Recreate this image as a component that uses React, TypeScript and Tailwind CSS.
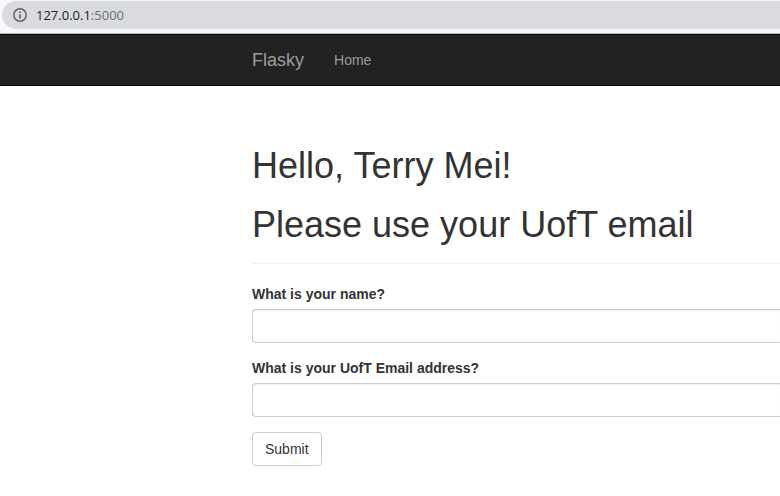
import React, { useState } from "react";

function InfoIcon() {
  return (
    <svg viewBox="0 0 16 16" className="h-4 w-4 shrink-0" aria-hidden="true">
      <circle cx="8" cy="8" r="6.2" fill="none" stroke="#5f6368" strokeWidth="1.5" />
      <rect x="7.2" y="4.4" width="1.6" height="1.6" fill="#5f6368" />
      <rect x="7.2" y="7.2" width="1.6" height="4.4" fill="#5f6368" />
    </svg>
  );
}

function AddressBar() {
  return (
    <div className="border-b border-[#b5b8b5] bg-[#f6f8fd] pt-px pb-1 pl-0.5">
      <div className="flex h-7 items-center gap-2 rounded-l-full bg-[#d9dbe0] pl-2.5 font-['Open_Sans','Noto_Sans',sans-serif] text-[13px] text-[#202124]">
        <InfoIcon />
        <span>
          127.0.0.1<span className="text-[#6b6e73]">:5000</span>
        </span>
      </div>
    </div>
  );
}

function Navbar() {
  return (
    <nav className="flex h-[52px] items-center gap-[30px] border-y border-[#080808] bg-[#222222] pl-[252px] text-[#9d9d9d]">
      <a href="#" className="text-lg leading-5">
        Flasky
      </a>
      <a href="#" className="text-sm leading-5">
        Home
      </a>
    </nav>
  );
}

type FieldProps = { id: string; label: string; type: string };

function Field({ id, label, type }: FieldProps) {
  const [value, setValue] = useState("");
  return (
    <div className="mb-[15px]">
      <label htmlFor={id} className="mb-[5px] block font-bold">
        {label}
      </label>
      <input
        id={id}
        type={type}
        value={value}
        onChange={(e) => setValue(e.target.value)}
        className="block h-[34px] w-full rounded-l-sm border border-r-0 border-[#cccccc] bg-white px-3 shadow-[inset_0_1px_1px_rgba(0,0,0,0.075)] outline-none focus:border-[#66afe9]"
      />
    </div>
  );
}

export default function App() {
  return (
    <div className="min-h-screen bg-white font-['Liberation_Sans',Arial,sans-serif] text-sm leading-5 text-[#333333]">
      <AddressBar />
      <Navbar />
      <main className="pt-[60px] pl-[252px]">
        <header className="mb-5 flex flex-col gap-5 border-b border-[#eeeeee] pb-[19px] text-4xl leading-[39px]">
          <h1 className="leading-[39px]">Hello, Terry Mei!</h1>
          <h1 className="leading-[39px]">Please use your UofT email</h1>
        </header>
        <form onSubmit={(e) => e.preventDefault()}>
          <Field id="name" label="What is your name?" type="text" />
          <Field id="email" label="What is your UofT Email address?" type="text" />
          <button
            type="submit"
            className="h-[34px] rounded-sm border border-[#cccccc] bg-white px-3 hover:bg-[#e6e6e6]"
          >
            Submit
          </button>
        </form>
      </main>
    </div>
  );
}
